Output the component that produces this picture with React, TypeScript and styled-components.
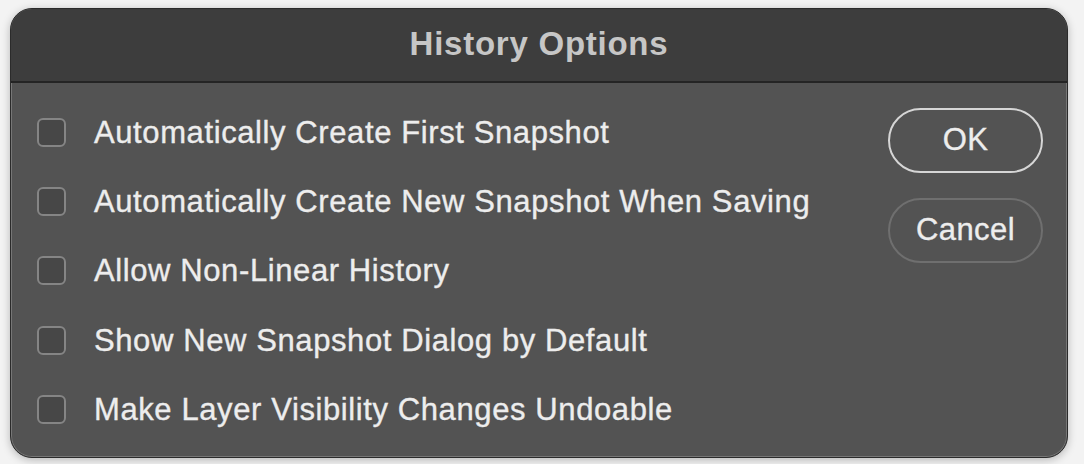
import React from "react";
import styled, { createGlobalStyle } from "styled-components";

const Global = createGlobalStyle`
  html, body { margin: 0; padding: 0; background: #f3f3f3; }
  body { font-family: "Liberation Sans", Arial, sans-serif; }
  * { box-sizing: border-box; }
`;

const Page = styled.div`
  width: 1084px;
  height: 464px;
  padding: 8px 16px 6px 10px;
  background: #f3f3f3;
`;

const Dialog = styled.div`
  width: 1058px;
  height: 450px;
  border-radius: 22px;
  background: #535353;
  border: 1px solid #2b2b2b;
  box-shadow: inset 0 0 0 1px #767676, 0 2px 8px rgba(0, 0, 0, 0.25);
  overflow: hidden;
  display: flex;
  flex-direction: column;
`;

const TitleBar = styled.div`
  height: 74px;
  flex: none;
  background: #3d3d3d;
  border-bottom: 2px solid #242424;
  display: flex;
  align-items: center;
  justify-content: center;
  padding-bottom: 2px;
`;

const Title = styled.h1`
  margin: 0;
  font-size: 33px;
  font-weight: 700;
  color: #c6c6c6;
  letter-spacing: 0.75px;
`;

const Body = styled.div`
  flex: 1;
  display: flex;
  padding: 15px 24px 0 26px;
`;

const List = styled.div`
  flex: 1;
  display: flex;
  flex-direction: column;
`;

const Row = styled.label`
  height: 69.2px;
  display: flex;
  align-items: center;
  gap: 28px;
`;

const Box = styled.span`
  width: 29px;
  height: 29px;
  flex: none;
  border-radius: 6px;
  border: 2px solid #858585;
  background: #474747;
`;

const Label = styled.span`
  font-size: 31px;
  color: #ededed;
  letter-spacing: 0.6px;
  -webkit-text-stroke: 0.35px #ededed;
  padding-top: 1px;
`;

const Buttons = styled.div`
  display: flex;
  flex-direction: column;
  gap: 25px;
  padding-top: 10px;
`;

const Button = styled.button<{ $primary?: boolean }>`
  width: 155px;
  height: 65px;
  border-radius: 33px;
  background: transparent;
  border: 2px solid ${(p) => (p.$primary ? "#d6d6d6" : "#6f6f6f")};
  color: #ededed;
  font-family: "Liberation Sans", Arial, sans-serif;
  font-size: 31px;
  letter-spacing: 0.4px;
  -webkit-text-stroke: 0.35px #ededed;
  padding: 0 0 2px;
`;

const options = [
  "Automatically Create First Snapshot",
  "Automatically Create New Snapshot When Saving",
  "Allow Non-Linear History",
  "Show New Snapshot Dialog by Default",
  "Make Layer Visibility Changes Undoable",
];

export default function App() {
  return (
    <>
      <Global />
      <Page>
        <Dialog>
          <TitleBar>
            <Title>History Options</Title>
          </TitleBar>
          <Body>
            <List>
              {options.map((o) => (
                <Row key={o}>
                  <Box />
                  <Label>{o}</Label>
                </Row>
              ))}
            </List>
            <Buttons>
              <Button $primary>OK</Button>
              <Button>Cancel</Button>
            </Buttons>
          </Body>
        </Dialog>
      </Page>
    </>
  );
}
